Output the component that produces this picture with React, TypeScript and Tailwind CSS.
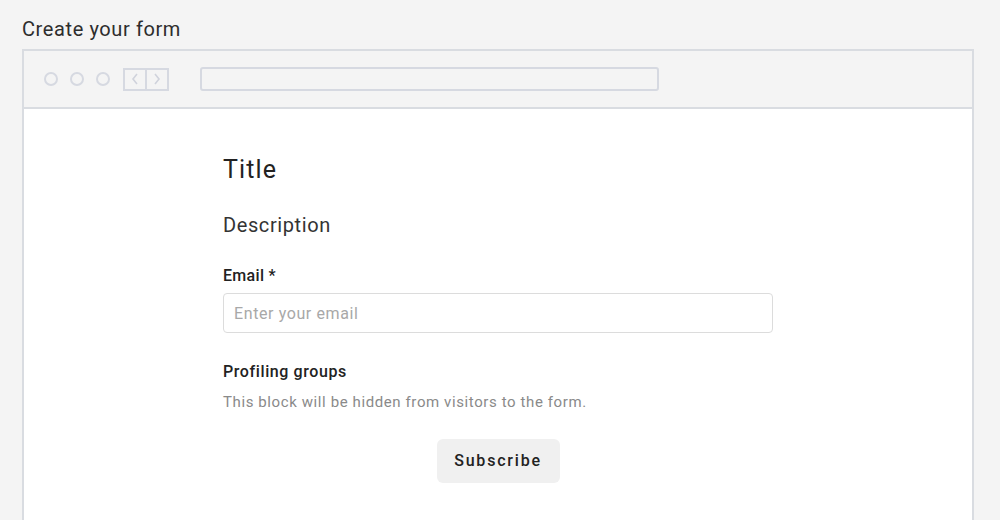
const BrowserBar = () => {
  return (
    <div className="flex h-[58px] items-center border-b-2 border-[#d9dce1] bg-[#f4f4f4] pl-[20px]">
      <div className="flex items-center gap-[12px]">
        <span className="h-[14px] w-[14px] rounded-full border-2 border-[#d6d9e1]" />
        <span className="h-[14px] w-[14px] rounded-full border-2 border-[#d6d9e1]" />
        <span className="h-[14px] w-[14px] rounded-full border-2 border-[#d6d9e1]" />
      </div>
      <div className="ml-[13px] flex h-[23px] w-[46px] border-2 border-[#d6d9e1]">
        <div className="flex flex-1 items-center justify-center border-r-2 border-[#d6d9e1]">
          <svg width="8" height="12" viewBox="0 0 8 12" fill="none">
            <path d="M6 1L2 6l4 5" stroke="#d0d3dc" strokeWidth="1.6" />
          </svg>
        </div>
        <div className="flex flex-1 items-center justify-center">
          <svg width="8" height="12" viewBox="0 0 8 12" fill="none">
            <path d="M2 1l4 5-4 5" stroke="#d0d3dc" strokeWidth="1.6" />
          </svg>
        </div>
      </div>
      <div className="ml-[31px] h-[24px] w-[459px] rounded-[3px] border-2 border-[#d6d9e1]" />
    </div>
  );
};

const App = () => {
  return (
    <main
      className="h-[520px] overflow-hidden bg-[#f4f4f4] pl-[22px] pr-[26px] pt-[15px]"
      style={{ fontFamily: "Roboto, 'Liberation Sans', sans-serif" }}
    >
      <h1 className="mb-[6px] text-[20px] leading-[28px] tracking-[0.6px] text-[#2d2d2d]">
        Create your form
      </h1>
      <div className="h-[500px] border-2 border-[#d9dce1] bg-white">
        <BrowserBar />
        <div className="mx-auto w-[550px] pt-[45px]">
          <h2 className="text-[25px] leading-[32px] tracking-[1.1px] text-[#222]">Title</h2>
          <p className="mt-[25px] text-[20px] leading-[28px] tracking-[0.6px] text-[#333]">
            Description
          </p>
          <label className="mt-[25px] block text-[16px] font-medium leading-[24px] tracking-[0.3px] text-[#222]">
            Email *
          </label>
          <input
            type="text"
            placeholder="Enter your email"
            className="mt-[5px] h-[40px] w-full rounded-[4px] border border-[#dcdcdc] px-[10px] text-[16px] tracking-[0.6px] text-[#333] outline-none placeholder:text-[#a8a8a8]"
          />
          <h3 className="mt-[27px] text-[16px] font-medium leading-[24px] tracking-[0.6px] text-[#222]">
            Profiling groups
          </h3>
          <p className="mt-[7px] text-[15px] leading-[22px] tracking-[0.6px] text-[#8a8a8a]">
            This block will be hidden from visitors to the form.
          </p>
          <div className="mt-[26px] flex justify-center">
            <button className="h-[44px] w-[123px] rounded-[6px] bg-[#f0f0f0] text-[16px] font-medium tracking-[1.8px] text-[#222]">
              Subscribe
            </button>
          </div>
        </div>
      </div>
    </main>
  );
};

export default App;
